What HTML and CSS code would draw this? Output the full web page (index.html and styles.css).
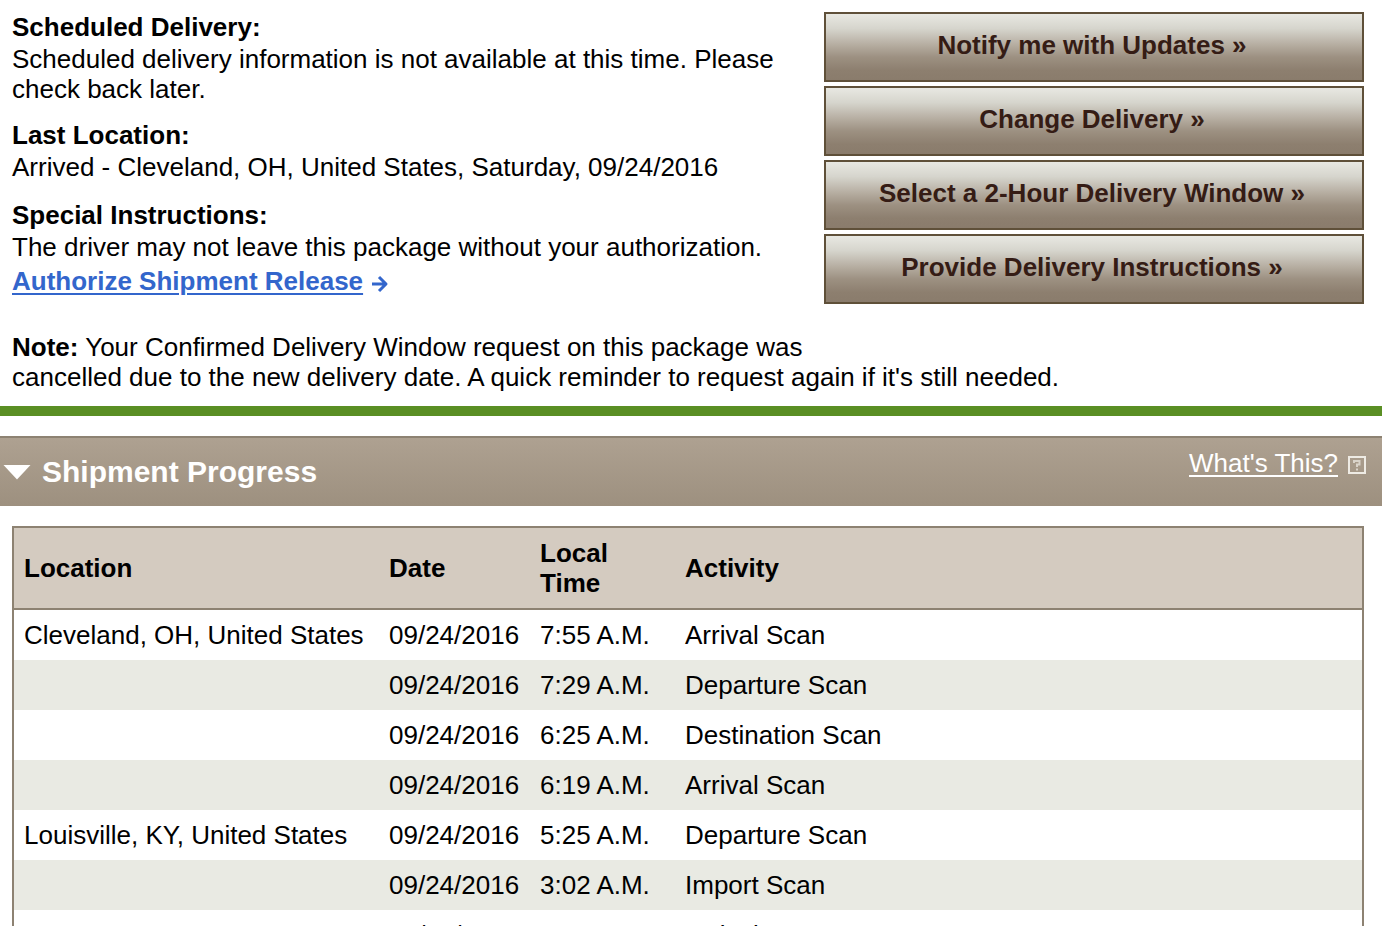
FILE: index.html
```html
<!DOCTYPE html>
<html lang="en">
<head>
  <meta charset="UTF-8">
  <meta name="viewport" content="width=device-width, initial-scale=1.0">
  <title>Shipment Tracking</title>
  <link rel="stylesheet" href="styles.css">
</head>
<body>
  <section class="summary">
    <div class="details">
      <h3>Scheduled Delivery:</h3>
      <p class="scheduled">Scheduled delivery information is not available at this time. Please check back later.</p>
      <h3>Last Location:</h3>
      <p class="location">Arrived - Cleveland, OH, United States, Saturday, 09/24/2016</p>
      <h3>Special Instructions:</h3>
      <p>The driver may not leave this package without your authorization.</p>
      <div class="release">
        <a href="#">Authorize Shipment Release</a>
        <svg class="arrow" viewBox="0 0 18 18" aria-hidden="true">
          <path d="M1 9H15M8 2L15 9L8 16" fill="none" stroke="#3366cc" stroke-width="3" stroke-linejoin="round"/>
        </svg>
      </div>
    </div>
    <div class="actions">
      <button type="button">Notify me with Updates »</button>
      <button type="button">Change Delivery »</button>
      <button type="button">Select a 2-Hour Delivery Window »</button>
      <button type="button">Provide Delivery Instructions »</button>
    </div>
  </section>

  <p class="note"><strong>Note:</strong> Your Confirmed Delivery Window request on this package was<br>cancelled due to the new delivery date. A quick reminder to request again if it's still needed.</p>

  <div class="section-bar">
    <svg class="toggle" viewBox="0 0 28 16" aria-hidden="true">
      <path d="M0.5 1H27.5L14 15.5Z" fill="#fff"/>
    </svg>
    <h2>Shipment Progress</h2>
    <div class="help">
      <a href="#">What's This?</a>
      <svg class="help-icon" viewBox="0 0 20 20" aria-hidden="true">
        <rect x="2" y="2" width="16" height="16" fill="none" stroke="#eeebe4" stroke-width="2"/>
        <path d="M7 8V6H12.500V9.500H10V12M10 13.500V15.500" fill="none" stroke="#d9d3c9" stroke-width="2"/>
      </svg>
    </div>
  </div>

  <div class="progress">
    <table>
      <thead>
        <tr>
          <th class="col-location">Location</th>
          <th class="col-date">Date</th>
          <th class="col-time">Local<br>Time</th>
          <th>Activity</th>
        </tr>
      </thead>
      <tbody>
        <tr><td>Cleveland, OH, United States</td><td>09/24/2016</td><td>7:55 A.M.</td><td>Arrival Scan</td></tr>
        <tr><td></td><td>09/24/2016</td><td>7:29 A.M.</td><td>Departure Scan</td></tr>
        <tr><td></td><td>09/24/2016</td><td>6:25 A.M.</td><td>Destination Scan</td></tr>
        <tr><td></td><td>09/24/2016</td><td>6:19 A.M.</td><td>Arrival Scan</td></tr>
        <tr><td>Louisville, KY, United States</td><td>09/24/2016</td><td>5:25 A.M.</td><td>Departure Scan</td></tr>
        <tr><td></td><td>09/24/2016</td><td>3:02 A.M.</td><td>Import Scan</td></tr>
        <tr><td></td><td>09/24/2016</td><td>1:28 A.M.</td><td>Arrival Scan</td></tr>
      </tbody>
    </table>
  </div>
</body>
</html>
```

FILE: styles.css
```css
body {
  margin: 0;
  background: #fff;
  color: #000;
  font-family: "Liberation Sans", Arial, Helvetica, sans-serif;
  font-size: 26px;
  line-height: 30px;
}

h2, h3, p {
  margin: 0;
}

/* Delivery summary */
.summary {
  display: flex;
  justify-content: space-between;
  gap: 40px;
  padding: 12px 18px 0 12px;
}

.details {
  flex: 1;
}

.details h3 {
  font-size: 26px;
  margin-bottom: 2px;
}

.scheduled {
  margin-bottom: 16px;
}

.location {
  margin-bottom: 18px;
}

.release {
  display: flex;
  align-items: center;
  gap: 8px;
  margin-top: 4px;
}

.release a {
  color: #3366cc;
  font-weight: bold;
}

.arrow {
  width: 18px;
  height: 18px;
  margin-top: 6px;
}

/* Action buttons */
.actions {
  display: flex;
  flex-direction: column;
  gap: 4px;
  width: 40%;
  max-width: 540px;
}

.actions button {
  height: 70px;
  padding: 0 4px 4px 0;
  border: 2px solid #5f5039;
  background: linear-gradient(#e8e8e2, #d6d5cd 22%, #b8b0a4 45%, #9d9182 65%, #8d7f6f 85%, #8a7c6c);
  color: #351c15;
  font-family: inherit;
  font-size: 26px;
  font-weight: bold;
  cursor: pointer;
}

.note {
  padding: 28px 12px 14px;
  border-bottom: 10px solid #5a8f24;
}

/* Section heading */
.section-bar {
  display: flex;
  align-items: center;
  height: 68px;
  margin-top: 20px;
  padding: 0 15px 0 3px;
  border-top: 2px solid #8d8272;
  background: linear-gradient(#aea191, #9d907f);
  color: #fff;
}

.section-bar h2 {
  margin-left: 11px;
  font-size: 30px;
}

.toggle {
  width: 28px;
  height: 16px;
}

.help {
  display: flex;
  align-items: center;
  gap: 9px;
  margin-left: auto;
  padding-bottom: 18px;
}

.help a {
  color: #fff;
}

.help-icon {
  width: 20px;
  height: 20px;
  margin-top: 4px;
}

.release a,
.help a {
  text-decoration-thickness: 2px;
  text-underline-offset: 3px;
}

/* Progress table */
.progress {
  padding: 20px 18px 20px 12px;
}

table {
  width: 100%;
  border: 2px solid #8d8272;
  border-spacing: 0;
}

th, td {
  height: 30px;
  padding: 10px;
  text-align: left;
}

th {
  border-bottom: 2px solid #8d8272;
  background: #d4cbc0;
}

.col-location {
  width: 345px;
}

.col-date {
  width: 131px;
}

.col-time {
  width: 125px;
}

tbody tr:nth-child(even) {
  background: #e9eae3;
}
```
